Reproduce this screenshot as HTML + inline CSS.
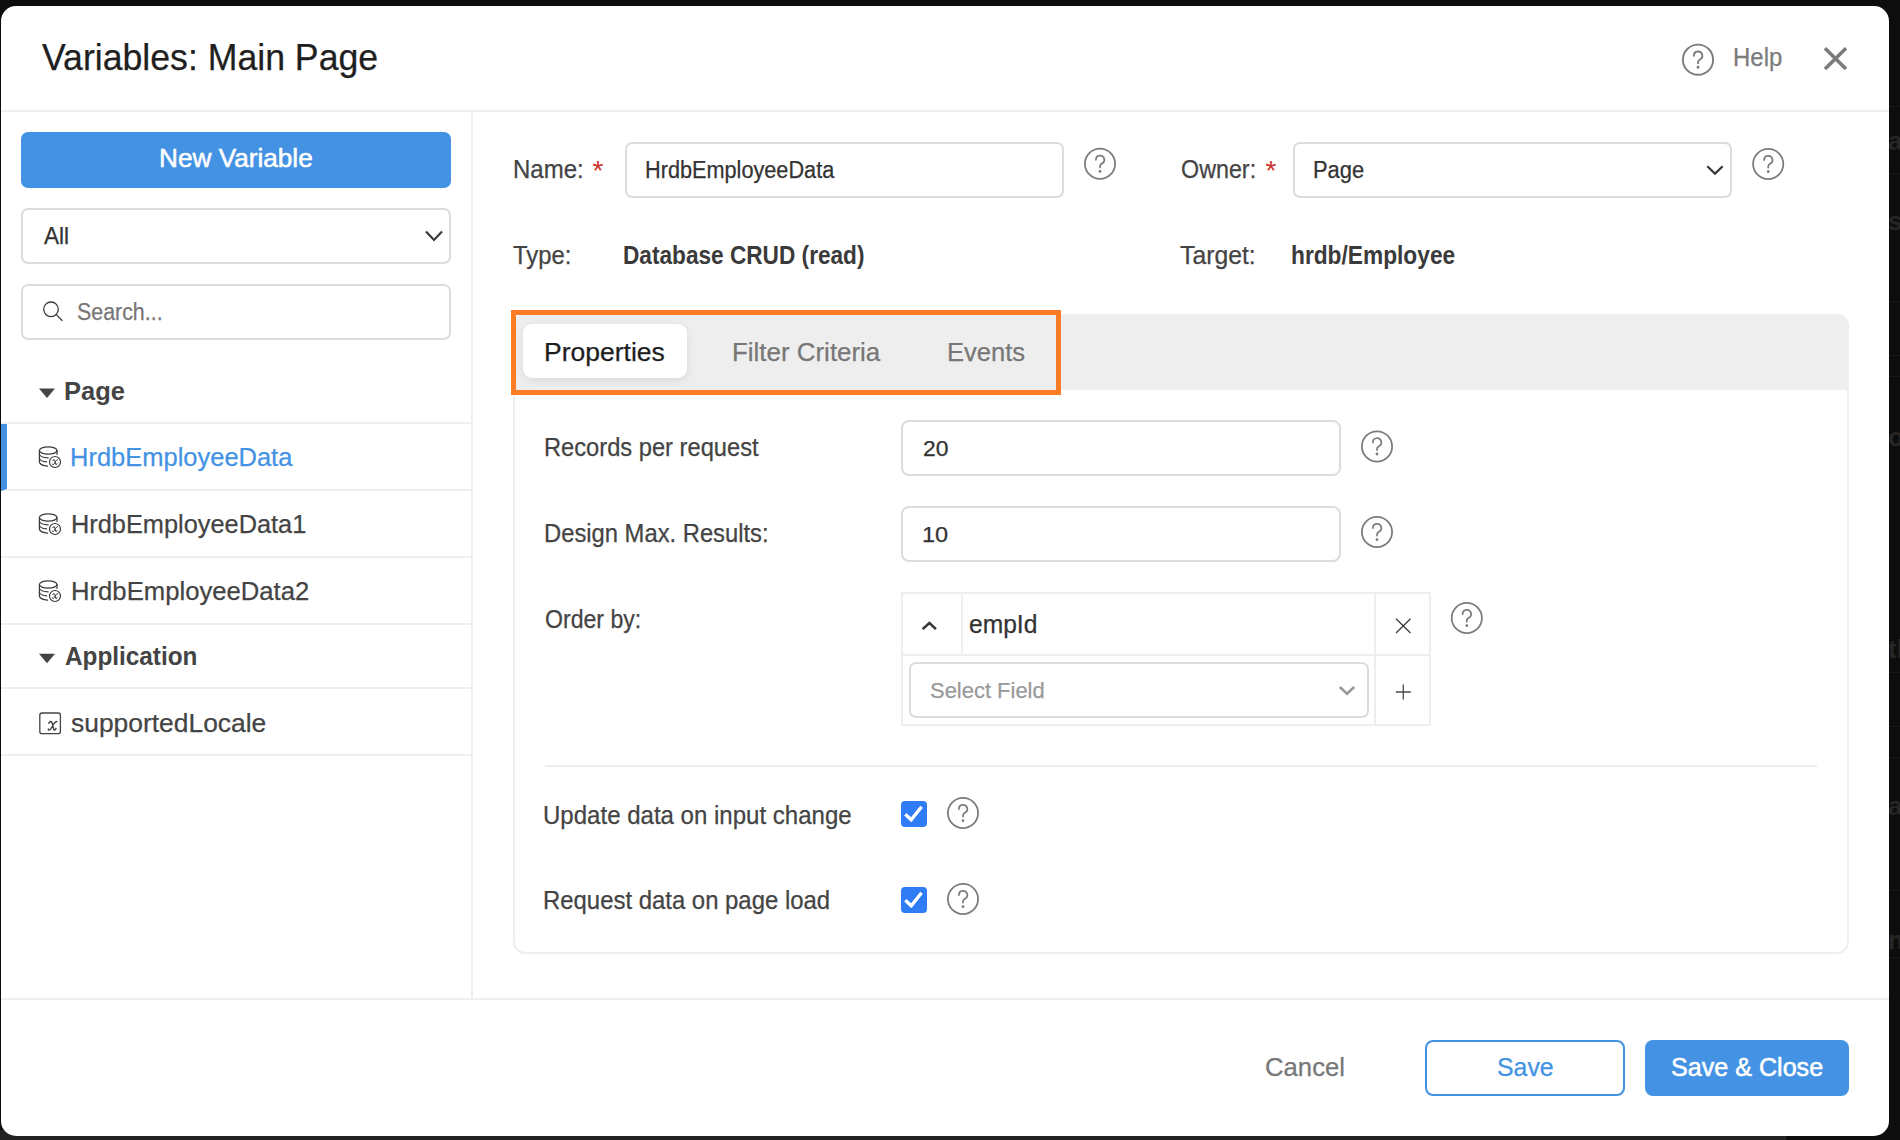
<!DOCTYPE html>
<html><head><meta charset="utf-8">
<style>
html,body{margin:0;padding:0;}
body{width:1900px;height:1140px;overflow:hidden;position:relative;background:#0d0d0d;font-family:"Liberation Sans",sans-serif;}
.a{position:absolute;box-sizing:border-box;}
.t{position:absolute;white-space:nowrap;line-height:1;}
svg{position:absolute;overflow:visible;z-index:5;}
</style></head>
<body>
<div class="a" style="left:0px;top:1130px;width:1786px;height:10px;background:#232323;"></div>
<div class="t" style="left:1888px;top:128px;font-size:26px;color:#262626;font-weight:bold;">ar</div>
<div class="t" style="left:1888px;top:208px;font-size:26px;color:#262626;font-weight:bold;">si</div>
<div class="t" style="left:1888px;top:424px;font-size:26px;color:#262626;font-weight:bold;">o</div>
<div class="t" style="left:1888px;top:636px;font-size:26px;color:#262626;font-weight:bold;">th</div>
<div class="t" style="left:1888px;top:793px;font-size:26px;color:#262626;font-weight:bold;">a</div>
<div class="t" style="left:1888px;top:927px;font-size:26px;color:#262626;font-weight:bold;">n</div>
<div class="a" style="left:1889px;top:106px;width:11px;height:1px;background:#171717;"></div>
<div class="a" style="left:1889px;top:173px;width:11px;height:1px;background:#171717;"></div>
<div class="a" style="left:1889px;top:301px;width:11px;height:1px;background:#171717;"></div>
<div class="a" style="left:1889px;top:355px;width:11px;height:1px;background:#171717;"></div>
<div class="a" style="left:1889px;top:376px;width:11px;height:1px;background:#171717;"></div>
<div class="a" style="left:1889px;top:672px;width:11px;height:1px;background:#171717;"></div>
<div class="a" style="left:1889px;top:726px;width:11px;height:1px;background:#171717;"></div>
<div class="a" style="left:1889px;top:757px;width:11px;height:1px;background:#171717;"></div>
<div class="a" style="left:1889px;top:890px;width:11px;height:1px;background:#171717;"></div>
<div class="a" style="left:1889px;top:957px;width:11px;height:1px;background:#171717;"></div>
<div class="a" style="left:1px;top:6px;width:1888px;height:1130px;background:#fff;border-radius:15px;"></div>
<div class="t" style="left:42.0px;top:40px;font-size:36px;color:#1f1f1f;transform:scaleX(0.9899);transform-origin:0 0;-webkit-text-stroke:0.25px #1f1f1f;">Variables: Main Page</div>
<div class="t" style="left:1733.08px;top:44.8px;font-size:25px;color:#7b7b7b;transform:scaleX(0.9592);transform-origin:0 0;-webkit-text-stroke:0.25px #7b7b7b;">Help</div>
<div class="a" style="left:1px;top:110px;width:1888px;height:2px;background:#eeeeee;"></div>
<div class="a" style="left:471px;top:112px;width:2px;height:886px;background:#eeeeee;"></div>
<div class="a" style="left:1px;top:998px;width:1888px;height:2px;background:#eeeeee;"></div>
<div class="a" style="left:21px;top:132px;width:430px;height:56px;background:#4392e3;border-radius:7px;"></div>
<div class="t" style="left:158.99px;top:144.7px;font-size:26px;color:#fff;transform:scaleX(1.0067);transform-origin:0 0;-webkit-text-stroke:0.55px #fff;">New Variable</div>
<div class="a" style="left:21px;top:208px;width:430px;height:56px;border:2px solid #dcdcdc;border-radius:7px;background:#fff;"></div>
<div class="t" style="left:43.5px;top:224.3px;font-size:24px;color:#333;transform:scaleX(0.94);transform-origin:0 0;-webkit-text-stroke:0.25px #333;">All</div>
<div class="a" style="left:21px;top:284px;width:430px;height:56px;border:2px solid #dcdcdc;border-radius:7px;background:#fff;"></div>
<div class="t" style="left:76.89px;top:301px;font-size:23.5px;color:#777;transform:scaleX(0.9099);transform-origin:0 0;-webkit-text-stroke:0.25px #777;">Search...</div>
<div class="t" style="left:64.34px;top:377.8px;font-size:26px;color:#444;font-weight:bold;transform:scaleX(0.9797);transform-origin:0 0;">Page</div>
<div class="a" style="left:1px;top:422px;width:470px;height:2px;background:#eeeeee;"></div>
<div class="a" style="left:1px;top:424px;width:6px;height:65px;background:#4392e3;"></div>
<div class="t" style="left:70.48px;top:443.8px;font-size:26.5px;color:#4392e3;transform:scaleX(0.9616);transform-origin:0 0;-webkit-text-stroke:0.25px #4392e3;">HrdbEmployeeData</div>
<div class="a" style="left:1px;top:489px;width:470px;height:2px;background:#eeeeee;"></div>
<div class="t" style="left:70.69px;top:510.8px;font-size:26.5px;color:#444;transform:scaleX(0.9564);transform-origin:0 0;-webkit-text-stroke:0.25px #444;">HrdbEmployeeData1</div>
<div class="a" style="left:1px;top:556px;width:470px;height:2px;background:#eeeeee;"></div>
<div class="t" style="left:70.66px;top:578.2px;font-size:26.5px;color:#444;transform:scaleX(0.9687);transform-origin:0 0;-webkit-text-stroke:0.25px #444;">HrdbEmployeeData2</div>
<div class="a" style="left:1px;top:623px;width:470px;height:2px;background:#eeeeee;"></div>
<div class="t" style="left:64.56px;top:643.3px;font-size:26px;color:#444;font-weight:bold;transform:scaleX(0.9353);transform-origin:0 0;">Application</div>
<div class="a" style="left:1px;top:687px;width:470px;height:2px;background:#eeeeee;"></div>
<div class="t" style="left:71.0px;top:710px;font-size:26.5px;color:#444;transform:scaleX(0.9964);transform-origin:0 0;-webkit-text-stroke:0.25px #444;">supportedLocale</div>
<div class="a" style="left:1px;top:754px;width:470px;height:2px;background:#eeeeee;"></div>
<div class="t" style="left:512.68px;top:157.3px;font-size:25px;color:#444;transform:scaleX(0.96);transform-origin:0 0;-webkit-text-stroke:0.25px #444;">Name:</div>
<div class="t" style="left:592.5px;top:156.70px;font-size:28px;color:#d0352c;">*</div>
<div class="a" style="left:624.5px;top:142px;width:439.5px;height:56px;border:2px solid #dcdcdc;border-radius:7px;background:#fff;"></div>
<div class="t" style="left:644.81px;top:159.3px;font-size:23px;color:#333;transform:scaleX(0.9427);transform-origin:0 0;-webkit-text-stroke:0.25px #333;">HrdbEmployeeData</div>
<div class="t" style="left:1180.87px;top:157.1px;font-size:25px;color:#444;transform:scaleX(0.9321);transform-origin:0 0;-webkit-text-stroke:0.25px #444;">Owner:</div>
<div class="t" style="left:1265.5px;top:156.70px;font-size:28px;color:#d0352c;">*</div>
<div class="a" style="left:1292.5px;top:142px;width:439.5px;height:56px;border:2px solid #dcdcdc;border-radius:7px;background:#fff;"></div>
<div class="t" style="left:1313.39px;top:159.1px;font-size:23px;color:#333;transform:scaleX(0.9529);transform-origin:0 0;-webkit-text-stroke:0.25px #333;">Page</div>
<div class="t" style="left:512.65px;top:243px;font-size:25px;color:#444;transform:scaleX(0.9534);transform-origin:0 0;-webkit-text-stroke:0.25px #444;">Type:</div>
<div class="t" style="left:622.99px;top:243px;font-size:25px;color:#3a3a3a;font-weight:bold;transform:scaleX(0.9053);transform-origin:0 0;">Database CRUD (read)</div>
<div class="t" style="left:1180.41px;top:242.8px;font-size:25px;color:#444;transform:scaleX(0.9904);transform-origin:0 0;-webkit-text-stroke:0.25px #444;">Target:</div>
<div class="t" style="left:1290.88px;top:242.8px;font-size:25px;color:#3a3a3a;font-weight:bold;transform:scaleX(0.909);transform-origin:0 0;">hrdb/Employee</div>
<div class="a" style="left:513px;top:314px;width:1336px;height:640px;border:2px solid #eeeeee;border-radius:12px;"></div>
<div class="a" style="left:513px;top:314px;width:1336px;height:76px;background:#eeeeee;border-radius:12px 12px 0 0;"></div>
<div class="a" style="left:523px;top:324px;width:164px;height:54px;background:#fff;border-radius:9px;box-shadow:0 2px 8px rgba(0,0,0,0.09);"></div>
<div class="t" style="left:543.76px;top:339px;font-size:26px;color:#1d1d1d;transform:scaleX(1.019);transform-origin:0 0;-webkit-text-stroke:0.25px #1d1d1d;">Properties</div>
<div class="t" style="left:731.51px;top:339px;font-size:26px;color:#777;transform:scaleX(0.9966);transform-origin:0 0;-webkit-text-stroke:0.25px #777;">Filter Criteria</div>
<div class="t" style="left:946.73px;top:339px;font-size:26px;color:#777;transform:scaleX(0.9831);transform-origin:0 0;-webkit-text-stroke:0.25px #777;">Events</div>
<div class="a" style="left:511px;top:310px;width:550px;height:85px;border:5px solid #fa7d26;"></div>
<div class="t" style="left:544.41px;top:435.2px;font-size:25px;color:#444;transform:scaleX(0.9473);transform-origin:0 0;-webkit-text-stroke:0.25px #444;">Records per request</div>
<div class="a" style="left:901px;top:420px;width:440px;height:56px;border:2px solid #dcdcdc;border-radius:7px;background:#fff;border-radius:8px;"></div>
<div class="t" style="left:922.78px;top:437.8px;font-size:22.5px;color:#333;transform:scaleX(1.0174);transform-origin:0 0;-webkit-text-stroke:0.25px #333;">20</div>
<div class="t" style="left:544.1px;top:520.8px;font-size:25px;color:#444;transform:scaleX(0.9509);transform-origin:0 0;-webkit-text-stroke:0.25px #444;">Design Max. Results:</div>
<div class="a" style="left:901px;top:506px;width:440px;height:56px;border:2px solid #dcdcdc;border-radius:7px;background:#fff;border-radius:8px;"></div>
<div class="t" style="left:922.11px;top:524.2px;font-size:22.5px;color:#333;transform:scaleX(1.0455);transform-origin:0 0;-webkit-text-stroke:0.25px #333;">10</div>
<div class="t" style="left:544.98px;top:607px;font-size:25px;color:#444;transform:scaleX(0.9238);transform-origin:0 0;-webkit-text-stroke:0.25px #444;">Order by:</div>
<div class="a" style="left:901px;top:592px;width:530px;height:134px;border:2px solid #eeeeee;"></div>
<div class="a" style="left:903px;top:654px;width:526px;height:2px;background:#eeeeee;"></div>
<div class="a" style="left:961px;top:594px;width:2px;height:60px;background:#eeeeee;"></div>
<div class="a" style="left:1374px;top:594px;width:2px;height:130px;background:#eeeeee;"></div>
<div class="t" style="left:968.62px;top:611.5px;font-size:25px;color:#333;transform:scaleX(0.9836);transform-origin:0 0;-webkit-text-stroke:0.25px #333;">empId</div>
<div class="a" style="left:909px;top:662px;width:460px;height:56px;border:2px solid #dcdcdc;border-radius:7px;background:#fff;"></div>
<div class="t" style="left:930.32px;top:679.9px;font-size:22.5px;color:#999;transform:scaleX(0.9757);transform-origin:0 0;-webkit-text-stroke:0.25px #999;">Select Field</div>
<div class="a" style="left:545px;top:765px;width:1272px;height:2px;background:#eeeeee;"></div>
<div class="t" style="left:543.38px;top:802.5px;font-size:25px;color:#444;transform:scaleX(0.9613);transform-origin:0 0;-webkit-text-stroke:0.25px #444;">Update data on input change</div>
<div class="t" style="left:543.09px;top:887.6px;font-size:25px;color:#444;transform:scaleX(0.9562);transform-origin:0 0;-webkit-text-stroke:0.25px #444;">Request data on page load</div>
<div class="a" style="left:901px;top:801px;width:26px;height:26px;background:#2f7cf6;border-radius:4px;"></div>
<div class="a" style="left:901px;top:887px;width:26px;height:26px;background:#2f7cf6;border-radius:4px;"></div>
<div class="t" style="left:1265.31px;top:1053.6px;font-size:26px;color:#777;transform:scaleX(0.9885);transform-origin:0 0;-webkit-text-stroke:0.25px #777;">Cancel</div>
<div class="a" style="left:1425px;top:1040px;width:200px;height:56px;border:2px solid #4392e3;border-radius:8px;"></div>
<div class="t" style="left:1496.74px;top:1053.6px;font-size:26px;color:#4392e3;transform:scaleX(0.9561);transform-origin:0 0;-webkit-text-stroke:0.25px #4392e3;">Save</div>
<div class="a" style="left:1645px;top:1040px;width:204px;height:56px;background:#4392e3;border-radius:8px;"></div>
<div class="t" style="left:1671.03px;top:1053.6px;font-size:26px;color:#fff;transform:scaleX(0.9658);transform-origin:0 0;-webkit-text-stroke:0.55px #fff;">Save &amp; Close</div>
<svg style="left:0;top:0" width="1900" height="1140">
<g transform="translate(1698,59.7)" fill="none" stroke="#7b7b7b" stroke-width="1.9">
    <circle r="15.1"/>
    <path d="M-4.1 -4 A4.2 4.2 0 1 1 1.9 -0.2 Q0 0.9 0 2.8 V3.6" stroke-linecap="round"/>
    <circle cy="7.6" r="0.9" fill="#7b7b7b" stroke-width="1.1"/>
  </g>
<path d="M1825 48.3 L1846 69 M1846 48.3 L1825 69" stroke="#7b7b7b" stroke-width="3.6" fill="none"/>
<path d="M426 231.5 L434 240 L442 231.5" fill="none" stroke="#3a3a3a" stroke-width="2.2"/>
<g fill="none" stroke="#3a3a3a" stroke-width="1.3"><circle cx="51" cy="309.3" r="7.3"/><path d="M56.3 314.6 L62.4 320.7"/></g>
<path d="M39 388.5 H55 L47 398 Z" fill="#444"/>
<path d="M1 489 H7 L1 491 Z" fill="#4392e3"/>
<path d="M39 653.8 H55 L47 663.3 Z" fill="#444"/>
<g transform="translate(30,440)">
  <g fill="none" stroke="#3a3a3a" stroke-width="1.2" stroke-linecap="round">
    <ellipse cx="18.2" cy="10.5" rx="8.8" ry="3.7"/>
    <path d="M9.4 10.5 V22.3 Q10.5 25.6 17.6 26.2"/>
    <path d="M9.4 14.4 Q10.5 17.6 18.2 17.8"/>
    <path d="M9.4 18.4 Q10.5 21.6 16.6 21.9"/>
    <path d="M27 10.5 V14.5"/>
    <circle cx="25" cy="22" r="5.5"/>
  </g>
  <path transform="translate(22.2,19.3) scale(0.6)" d="M0.9 2.2 Q1.6 0.3 3.1 0.5 Q4.1 0.8 4.6 3 L5.7 7.8 Q6.2 9.5 7.1 9 Q7.9 8.6 8.1 7.3 M8.9 0.5 Q7.1 0.8 5.5 3.5 L3.6 6.8 Q2.4 9.2 1.1 9 Q0.3 8.8 0.4 8" fill="none" stroke="#3a3a3a" stroke-width="1.65" stroke-linecap="round"/>
</g>
<g transform="translate(30,507)">
  <g fill="none" stroke="#3a3a3a" stroke-width="1.2" stroke-linecap="round">
    <ellipse cx="18.2" cy="10.5" rx="8.8" ry="3.7"/>
    <path d="M9.4 10.5 V22.3 Q10.5 25.6 17.6 26.2"/>
    <path d="M9.4 14.4 Q10.5 17.6 18.2 17.8"/>
    <path d="M9.4 18.4 Q10.5 21.6 16.6 21.9"/>
    <path d="M27 10.5 V14.5"/>
    <circle cx="25" cy="22" r="5.5"/>
  </g>
  <path transform="translate(22.2,19.3) scale(0.6)" d="M0.9 2.2 Q1.6 0.3 3.1 0.5 Q4.1 0.8 4.6 3 L5.7 7.8 Q6.2 9.5 7.1 9 Q7.9 8.6 8.1 7.3 M8.9 0.5 Q7.1 0.8 5.5 3.5 L3.6 6.8 Q2.4 9.2 1.1 9 Q0.3 8.8 0.4 8" fill="none" stroke="#3a3a3a" stroke-width="1.65" stroke-linecap="round"/>
</g>
<g transform="translate(30,574)">
  <g fill="none" stroke="#3a3a3a" stroke-width="1.2" stroke-linecap="round">
    <ellipse cx="18.2" cy="10.5" rx="8.8" ry="3.7"/>
    <path d="M9.4 10.5 V22.3 Q10.5 25.6 17.6 26.2"/>
    <path d="M9.4 14.4 Q10.5 17.6 18.2 17.8"/>
    <path d="M9.4 18.4 Q10.5 21.6 16.6 21.9"/>
    <path d="M27 10.5 V14.5"/>
    <circle cx="25" cy="22" r="5.5"/>
  </g>
  <path transform="translate(22.2,19.3) scale(0.6)" d="M0.9 2.2 Q1.6 0.3 3.1 0.5 Q4.1 0.8 4.6 3 L5.7 7.8 Q6.2 9.5 7.1 9 Q7.9 8.6 8.1 7.3 M8.9 0.5 Q7.1 0.8 5.5 3.5 L3.6 6.8 Q2.4 9.2 1.1 9 Q0.3 8.8 0.4 8" fill="none" stroke="#3a3a3a" stroke-width="1.65" stroke-linecap="round"/>
</g>
<g transform="translate(30,705)">
  <rect x="9.8" y="8" width="20.6" height="20.6" rx="2.2" fill="none" stroke="#444" stroke-width="1.3"/>
  <path transform="translate(17.9,16)" d="M0.9 2.2 Q1.6 0.3 3.1 0.5 Q4.1 0.8 4.6 3 L5.7 7.8 Q6.2 9.5 7.1 9 Q7.9 8.6 8.1 7.3 M8.9 0.5 Q7.1 0.8 5.5 3.5 L3.6 6.8 Q2.4 9.2 1.1 9 Q0.3 8.8 0.4 8" fill="none" stroke="#3a3a3a" stroke-width="1.35" stroke-linecap="round"/>
</g>
<g transform="translate(1100,163.8)" fill="none" stroke="#7b7b7b" stroke-width="1.75">
    <circle r="15.1"/>
    <path d="M-4.1 -4 A4.2 4.2 0 1 1 1.9 -0.2 Q0 0.9 0 2.8 V3.6" stroke-linecap="round"/>
    <circle cy="7.6" r="0.9" fill="#7b7b7b" stroke-width="1.1"/>
  </g>
<g transform="translate(1768.2,164)" fill="none" stroke="#7b7b7b" stroke-width="1.75">
    <circle r="15.1"/>
    <path d="M-4.1 -4 A4.2 4.2 0 1 1 1.9 -0.2 Q0 0.9 0 2.8 V3.6" stroke-linecap="round"/>
    <circle cy="7.6" r="0.9" fill="#7b7b7b" stroke-width="1.1"/>
  </g>
<g transform="translate(1377,446.4)" fill="none" stroke="#7b7b7b" stroke-width="1.75">
    <circle r="15.1"/>
    <path d="M-4.1 -4 A4.2 4.2 0 1 1 1.9 -0.2 Q0 0.9 0 2.8 V3.6" stroke-linecap="round"/>
    <circle cy="7.6" r="0.9" fill="#7b7b7b" stroke-width="1.1"/>
  </g>
<g transform="translate(1377,532)" fill="none" stroke="#7b7b7b" stroke-width="1.75">
    <circle r="15.1"/>
    <path d="M-4.1 -4 A4.2 4.2 0 1 1 1.9 -0.2 Q0 0.9 0 2.8 V3.6" stroke-linecap="round"/>
    <circle cy="7.6" r="0.9" fill="#7b7b7b" stroke-width="1.1"/>
  </g>
<g transform="translate(1466.8,618)" fill="none" stroke="#7b7b7b" stroke-width="1.75">
    <circle r="15.1"/>
    <path d="M-4.1 -4 A4.2 4.2 0 1 1 1.9 -0.2 Q0 0.9 0 2.8 V3.6" stroke-linecap="round"/>
    <circle cy="7.6" r="0.9" fill="#7b7b7b" stroke-width="1.1"/>
  </g>
<g transform="translate(963,813)" fill="none" stroke="#7b7b7b" stroke-width="1.75">
    <circle r="15.1"/>
    <path d="M-4.1 -4 A4.2 4.2 0 1 1 1.9 -0.2 Q0 0.9 0 2.8 V3.6" stroke-linecap="round"/>
    <circle cy="7.6" r="0.9" fill="#7b7b7b" stroke-width="1.1"/>
  </g>
<g transform="translate(963,899)" fill="none" stroke="#7b7b7b" stroke-width="1.75">
    <circle r="15.1"/>
    <path d="M-4.1 -4 A4.2 4.2 0 1 1 1.9 -0.2 Q0 0.9 0 2.8 V3.6" stroke-linecap="round"/>
    <circle cy="7.6" r="0.9" fill="#7b7b7b" stroke-width="1.1"/>
  </g>
<path d="M1707.3 166.2 L1715 173.6 L1722.7 166.2" fill="none" stroke="#3a3a3a" stroke-width="2.2"/>
<path d="M923.3 628.5 L929.4 623 L935.3 628.5" fill="none" stroke="#3a3a3a" stroke-width="2.5" stroke-linecap="round"/>
<path d="M1396 618.8 L1410.5 633 M1410.5 618.8 L1396 633" fill="none" stroke="#3a3a3a" stroke-width="1.25"/>
<path d="M1339.8 687 L1347 693.8 L1354.2 687" fill="none" stroke="#999" stroke-width="2.6"/>
<path d="M1403.3 684.5 V699.6 M1395.8 692 H1410.8" fill="none" stroke="#4a4a4a" stroke-width="1.3"/>
<path d="M905.3 814.3 L911.2 819.7 L921.6 806.7" fill="none" stroke="#fff" stroke-width="3.4"/>
<path d="M905.3 900.3 L911.2 905.7 L921.6 892.7" fill="none" stroke="#fff" stroke-width="3.4"/>
</svg>
</body></html>
